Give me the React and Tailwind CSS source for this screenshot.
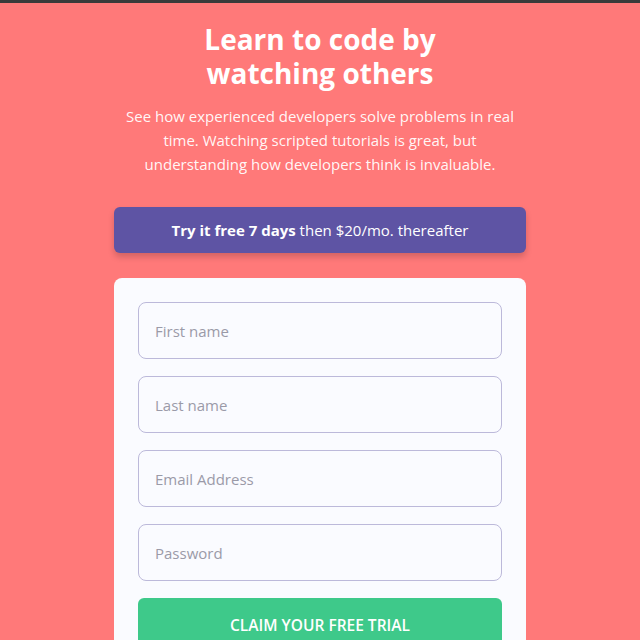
export default function App() {
  const fields = ["First name", "Last name", "Email Address", "Password"];

  return (
    <div className="min-h-screen bg-[#ff7979] font-['Open_Sans',sans-serif] text-white">
      <div className="h-[3px] bg-[#3a3a3a]"></div>
      <div className="mx-auto w-[412px] pt-[19px]">
        <h1 className="text-center text-[28px] font-bold leading-[34px]">
          Learn to code by
          <br />
          watching others
        </h1>
        <p className="mt-[14px] text-center text-[15px] leading-[24px] text-white/95">
          See how experienced developers solve problems in real time. Watching scripted tutorials is great, but
          understanding how developers think is invaluable.
        </p>

        <div className="mt-[31px] flex h-[46px] items-center justify-center rounded-[6px] bg-[#5e54a4] text-[15px] shadow-[0_4px_6px_rgba(0,0,0,0.18)]">
          <span>
            <span className="font-bold">Try it free 7 days</span> then $20/mo. thereafter
          </span>
        </div>

        <div className="mt-[25px] rounded-[8px] bg-[#fafbff] px-[24px] pt-[24px] pb-[24px]">
          <form className="flex flex-col gap-[17px]" onSubmit={(e) => e.preventDefault()}>
            {fields.map((f) => (
              <input
                key={f}
                type={f === "Password" ? "password" : "text"}
                placeholder={f}
                className="h-[57px] w-full rounded-[8px] border-[1.5px] border-[#bcb9da] bg-transparent px-[16px] text-[15px] text-gray-700 placeholder-[#9a9aa8] outline-none"
              />
            ))}
            <button
              type="submit"
              className="h-[56px] w-full rounded-[6px] bg-[#3ec98a] text-[15.5px] font-semibold uppercase text-white shadow-[0_4px_0_#2fa572]"
            >
              Claim your free trial
            </button>
          </form>
        </div>
      </div>
    </div>
  );
}
